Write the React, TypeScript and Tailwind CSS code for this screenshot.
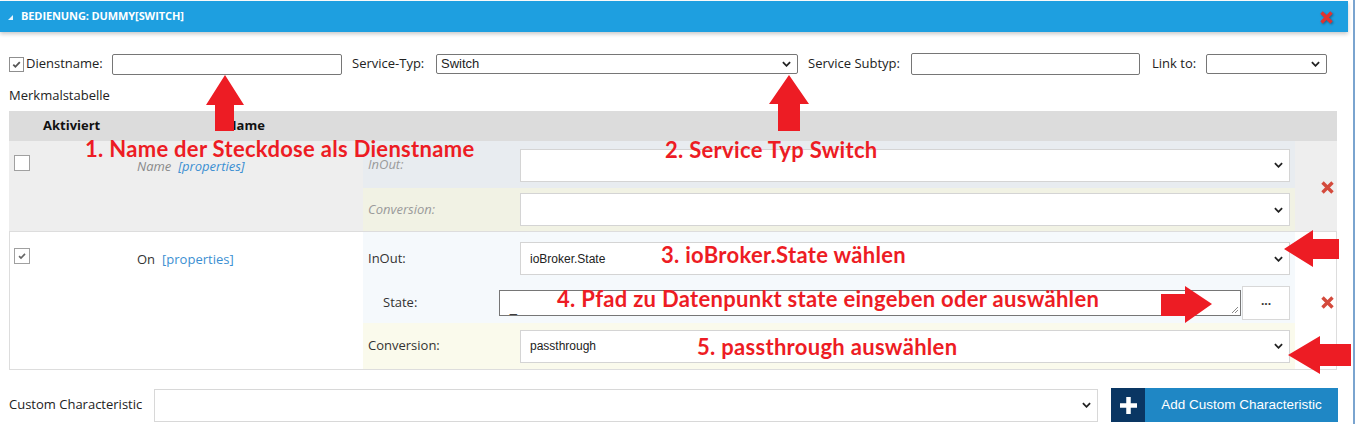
import React from "react";

function Chevron({ className = "" }: { className?: string }) {
  return (
    <svg viewBox="0 0 10 6" className={className} fill="none" stroke="currentColor" strokeWidth={2}>
      <path d="M1 1l4 4 4-4" />
    </svg>
  );
}

function RedX({ shadow = false }: { shadow?: boolean }) {
  return (
    <svg width="15" height="15" viewBox="0 0 15 15" className={shadow ? "drop-shadow-[1px_1px_1px_rgba(0,0,0,0.35)]" : ""}>
      <path d="M2.5 2.5L12.5 12.5M12.5 2.5L2.5 12.5" stroke={shadow ? "#e0322f" : "#d44a3c"} strokeWidth={3.4} />
    </svg>
  );
}

function Check({ className = "" }: { className?: string }) {
  return (
    <svg viewBox="0 0 12 12" className={className} fill="none" stroke="currentColor" strokeWidth={2}>
      <path d="M2.5 6.2l2.3 2.3 4.8-5" />
    </svg>
  );
}

function FakeSelect({ value, className }: { value?: string; className: string }) {
  return (
    <div className={`flex items-center justify-between bg-white font-['Liberation_Sans',Arial,sans-serif] ${className}`}>
      <span>{value}</span>
      <Chevron className="h-[6px] w-[9px] text-[#222]" />
    </div>
  );
}

function SubRow({
  label,
  italic,
  bg,
  className,
  children,
}: {
  label: string;
  italic?: boolean;
  bg: string;
  className: string;
  children: React.ReactNode;
}) {
  return (
    <div className={`flex items-center pr-[5px] ${bg} ${className}`}>
      <span className={`w-[157px] pl-[5px] ${italic ? "italic text-[#9a9a9a]" : "text-[#333]"}`}>{label}</span>
      {children}
    </div>
  );
}

function Annotations() {
  return (
    <>
      <svg className="pointer-events-none absolute inset-0" width="1364" height="424">
        <g fill="#ed1c24">
          <polygon points="225,75 244,105 234,105 234,131 215,131 215,105 206,105" />
          <polygon points="789,75 809,104 800,104 800,131 778,131 778,104 769,104" />
          <polygon points="1284,249 1313,230 1313,239 1339,239 1339,259 1313,259 1313,267" />
          <polygon points="1212,304 1185,286 1185,294 1161,294 1161,316 1185,316 1185,323" />
          <polygon points="1288,355 1320,336 1320,344 1351,344 1351,366 1320,366 1320,374" />
        </g>
      </svg>
      <div className="pointer-events-none absolute inset-0 font-['Lato',sans-serif] text-[22px] font-bold leading-[24px] tracking-[0.3px] text-[#ed1c24]">
        <span className="absolute left-[85px] top-[137px]">1. Name der Steckdose als Dienstname</span>
        <span className="absolute left-[665px] top-[138px]">2. Service Typ Switch</span>
        <span className="absolute left-[661px] top-[243px]">3. ioBroker.State wählen</span>
        <span className="absolute left-[557px] top-[287px]">4. Pfad zu Datenpunkt state eingeben oder auswählen</span>
        <span className="absolute left-[697px] top-[335px]">5. passthrough auswählen</span>
      </div>
    </>
  );
}

export default function App() {
  return (
    <div className="relative h-[424px] w-[1364px] overflow-hidden bg-white font-['Open_Sans',sans-serif] text-[13px] text-[#222]">
      <div className="flex h-full">
        <div className="w-[1348px]">
          <div className="mt-[1px] flex h-[31px] items-center justify-between bg-[#1e9fe0] shadow-[0_2px_4px_rgba(0,0,0,0.22)]">
            <div className="flex items-center">
              <svg width="5" height="5" viewBox="0 0 5 5" className="ml-[8px] mt-[1px]">
                <polygon points="5,0 5,5 0,5" fill="#e8f4fc" />
              </svg>
              <span className="ml-[8px] text-[11px] font-bold tracking-[-0.1px] text-white">BEDIENUNG: DUMMY[SWITCH]</span>
            </div>
            <div className="mr-[14px] mt-[2px]">
              <RedX shadow />
            </div>
          </div>

          <div className="pl-[9px]">
            <div className="mt-[21px] flex h-[22px] items-center">
              <div className="flex h-[15px] w-[15px] items-center justify-center border border-[#8f8f8f] bg-white">
                <Check className="h-[11px] w-[11px] text-[#555]" />
              </div>
              <span className="ml-[2px] w-[86px]">Dienstname:</span>
              <div className="h-[21px] w-[230px] rounded-[2px] border border-[#767676] bg-white" />
              <span className="ml-[10px] w-[84px]">Service-Typ:</span>
              <FakeSelect value="Switch" className="h-[20px] w-[362px] rounded-[2px] border border-[#767676] pl-[4px] pr-[6px] text-[13px]" />
              <span className="ml-[10px] w-[103px]">Service Subtyp:</span>
              <div className="h-[22px] w-[229px] rounded-[2px] border border-[#767676] bg-white" />
              <span className="ml-[12px] w-[54px]">Link to:</span>
              <FakeSelect className="h-[20px] w-[121px] rounded-[2px] border border-[#767676] pr-[6px]" />
            </div>

            <div className="mt-[12px] leading-[16px]">Merkmalstabelle</div>

            <div className="mt-[8px] w-[1328px]">
              <div className="flex h-[30px] items-center bg-[#dcdcdc] font-bold text-[#111]">
                <span className="ml-[34px] w-[183px]">Aktiviert</span>
                <span>Name</span>
              </div>

              <div className="flex h-[91px] border-b border-[#dddddd] bg-[#eeeeee]">
                <div className="flex w-[354px] items-start pl-[5px] pt-[14px]">
                  <div className="h-[16px] w-[16px] border border-[#a0a0a0] bg-white" />
                  <span className="ml-[107px] mt-[2px] leading-[18px] italic text-[#8a8a8a]">Name</span>
                  <span className="ml-[7px] mt-[2px] leading-[18px] italic text-[#3b8fd2]">[properties]</span>
                </div>
                <div className="flex w-[932px] flex-col">
                  <SubRow label="InOut:" italic bg="bg-[#e8ecf0]" className="h-[47px] pt-[1px]">
                    <FakeSelect className="h-[33px] w-[770px] border border-[#d4d4d4] pr-[6px]" />
                  </SubRow>
                  <SubRow label="Conversion:" italic bg="bg-[#f1f2e4]" className="h-[43px]">
                    <FakeSelect className="h-[33px] w-[770px] border border-[#d4d4d4] pr-[6px]" />
                  </SubRow>
                </div>
                <div className="flex flex-1 items-center pl-[25px] pt-[2px]">
                  <RedX />
                </div>
              </div>

              <div className="flex h-[138px] border-x border-b border-[#dddddd] bg-white">
                <div className="flex w-[353px] items-start pl-[4px] pt-[16px]">
                  <div className="flex h-[16px] w-[16px] items-center justify-center border border-[#a0a0a0] bg-white">
                    <Check className="h-[10px] w-[10px] text-[#666]" />
                  </div>
                  <span className="ml-[107px] mt-[2px] leading-[18px] text-[#333]">On</span>
                  <span className="ml-[7px] mt-[2px] leading-[18px] text-[#3b8fd2]">[properties]</span>
                </div>
                <div className="flex w-[932px] flex-col">
                  <SubRow label="InOut:" bg="bg-[#f5f9fc]" className="h-[50px] pt-[3px]">
                    <FakeSelect value="ioBroker.State" className="h-[33px] w-[770px] border border-[#d4d4d4] pl-[9px] pr-[6px] text-[12px] text-[#222]" />
                  </SubRow>
                  <div className="flex h-[41px] items-center bg-[#f5f9fc] pr-[5px]">
                    <span className="w-[136px] pl-[20px] text-[#333]">State:</span>
                    <div className="relative h-[26px] w-[744px] border border-[#767676] bg-white font-['Liberation_Sans',Arial,sans-serif] text-[13px]">
                      <span className="absolute bottom-[1px] left-[10px] leading-none">_</span>
                      <svg width="8" height="8" viewBox="0 0 8 8" className="absolute bottom-[1px] right-[1px]">
                        <path d="M7 1L1 7M7 4L4 7" stroke="#888" strokeWidth="1" />
                      </svg>
                    </div>
                    <div className="ml-[1px] flex h-[34px] w-[48px] items-center justify-center border border-[#d8d8d8] bg-white pb-[4px] text-[12px] font-bold text-[#333]">
                      ...
                    </div>
                  </div>
                  <SubRow label="Conversion:" bg="bg-[#fafaec]" className="h-[46px]">
                    <FakeSelect value="passthrough" className="h-[33px] w-[770px] border border-[#d4d4d4] pl-[9px] pr-[6px] text-[12px] text-[#222]" />
                  </SubRow>
                </div>
                <div className="flex flex-1 items-center pl-[25px] pt-[3px]">
                  <RedX />
                </div>
              </div>
            </div>

            <div className="mt-[18px] flex items-center">
              <span className="w-[145px]">Custom Characteristic</span>
              <FakeSelect className="h-[33px] w-[944px] border border-[#d8d8d8] pr-[6px]" />
              <div className="ml-[13px] flex h-[34px] w-[227px]">
                <div className="flex w-[34px] items-center justify-center bg-[#0a3663]">
                  <svg width="17" height="17" viewBox="0 0 17 17">
                    <path d="M8.5 0V17M0 8.5H17" stroke="#fff" strokeWidth="4.5" />
                  </svg>
                </div>
                <div className="flex flex-1 items-center justify-center bg-[#1f87c5] font-['Liberation_Sans',Arial,sans-serif] text-[13.5px] text-white">
                  Add Custom Characteristic
                </div>
              </div>
            </div>
          </div>
        </div>
        <div className="ml-[5px] h-full w-[2px] bg-[#7aa4cf]" />
      </div>
      <Annotations />
    </div>
  );
}
